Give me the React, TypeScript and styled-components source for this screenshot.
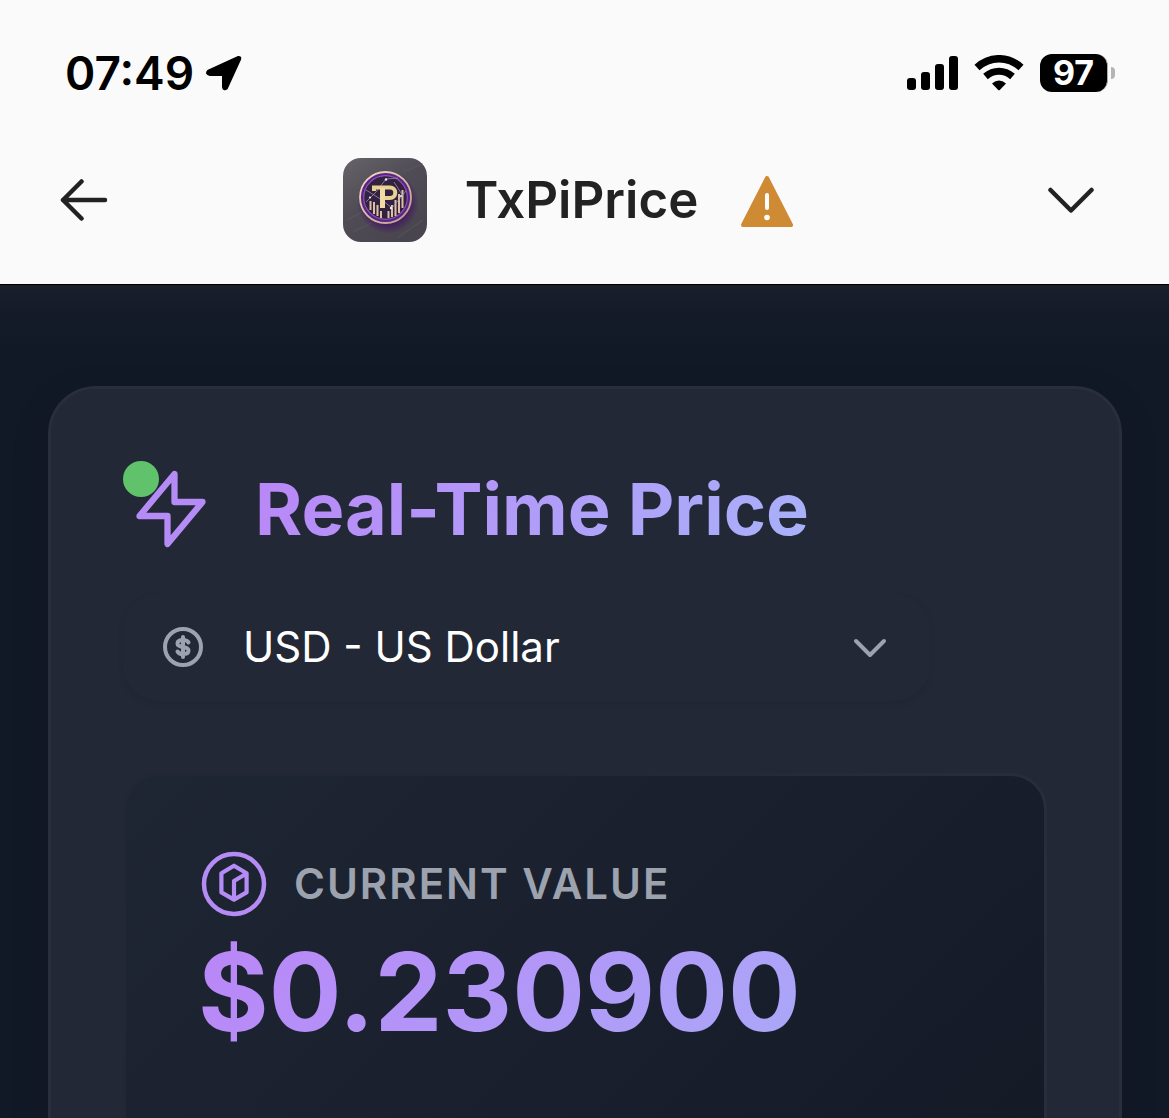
import React from "react";
import styled, { createGlobalStyle } from "styled-components";

const GlobalStyle = createGlobalStyle`
  *, *::before, *::after { box-sizing: border-box; }
  body {
    margin: 0;
    background: #121926;
    font-family: Inter, "Liberation Sans", sans-serif;
  }
  h1, h2, p { margin: 0; }
  svg { display: block; flex: none; }
`;

const Screen = styled.div`
  display: flex;
  flex-direction: column;
  height: 100vh;
  overflow: hidden;
`;

const Header = styled.header`
  flex: none;
  padding-bottom: 30px;
  background: #fafafa;
  border-bottom: 1px solid #000;
`;

const StatusBar = styled.div`
  display: flex;
  align-items: center;
  justify-content: space-between;
  height: 146px;
  padding: 0 54px 0 65px;
  color: #000;
`;

const StatusGroup = styled.div<{ $gap: number }>`
  display: flex;
  align-items: center;
  gap: ${(p) => p.$gap}px;
`;

const Clock = styled.time`
  font-size: 46px;
  line-height: 58px;
  font-weight: 600;
`;

const Battery = styled.div`
  display: flex;
  align-items: center;
  gap: 3px;
`;

const BatteryLevel = styled.span`
  display: grid;
  place-items: center;
  width: 68px;
  height: 38px;
  border-radius: 12px;
  background: #000;
  border-right: 1px solid #aaa;
  color: #fff;
  font-size: 34px;
  line-height: 38px;
  font-weight: 700;
`;

const BatteryTip = styled.span`
  width: 4px;
  height: 12px;
  border-radius: 0 6px 6px 0;
  background: #b4b4b4;
`;

const NavBar = styled.nav`
  display: flex;
  align-items: center;
  justify-content: space-between;
  height: 108px;
  padding: 0 75px 0 60px;
`;

const IconButton = styled.button`
  display: grid;
  place-items: center;
  width: 48px;
  height: 84px;
  padding: 0;
  border: 0;
  background: none;
  color: #222;
  cursor: pointer;
`;

const AppIdentity = styled.div`
  display: flex;
  align-items: center;
  padding-right: 17px;
`;

const AppName = styled.h1`
  margin: 0 42px 0 38px;
  color: #222;
  font-size: 51px;
  line-height: 66px;
  font-weight: 600;
`;

const Main = styled.main`
  flex: 1;
  min-height: 0;
  overflow: hidden;
  padding: 101px 47px 48px 48px;
  background: linear-gradient(180deg, #191f2b 0, #141b28 30px, #121926 72px);
`;

const Card = styled.section`
  padding: 72px;
  border: 3px solid #282e3b;
  border-radius: 48px;
  background: #222835;
  box-shadow: 0 12px 36px rgba(14, 18, 34, 0.2);
`;

const CardHeader = styled.div`
  display: flex;
  align-items: center;
  gap: 36px;
`;

const LiveIcon = styled.div`
  position: relative;
  padding: 6px;
  color: #b58cf5;
`;

const LiveDot = styled.span`
  position: absolute;
  top: 0;
  left: 0;
  width: 36px;
  height: 36px;
  border-radius: 50%;
  background: #61c26c;
`;

const GradientTitle = styled.h2`
  font-size: 72px;
  line-height: 96px;
  font-weight: 700;
  color: transparent;
  background: linear-gradient(135deg, #ba85f7, #a8b3fa);
  background-clip: text;
`;

const SelectBox = styled.label`
  position: relative;
  display: block;
  max-width: 807px;
  margin: 36px 0 72px;
  border-radius: 36px;
  background: #222835;
  box-shadow: 0 3px 6px rgba(16, 20, 32, 0.08);
  color: #9ca3af;
`;

const Select = styled.select`
  display: block;
  appearance: none;
  width: 100%;
  height: 108px;
  padding: 0 120px;
  border: 0;
  border-radius: 36px;
  background: transparent;
  color: #fff;
  font: 400 42px/54px Inter, "Liberation Sans", sans-serif;
`;

const FieldIcon = styled.span<{ $side: "left" | "right" }>`
  position: absolute;
  top: 0;
  bottom: 0;
  ${(p) => p.$side}: 36px;
  display: flex;
  align-items: center;
  pointer-events: none;
`;

const ValuePanel = styled.div`
  padding: 72px 72px 144px;
  border: 3px solid transparent;
  border-radius: 36px;
  background:
    linear-gradient(135deg, #1f2633, #141926) padding-box,
    linear-gradient(100deg, #212733 40%, #282e3b) border-box;
`;

const ValueLabel = styled.div`
  display: flex;
  align-items: center;
  gap: 24px;
  color: #9ca3af;
  font-size: 42px;
  line-height: 72px;
  font-weight: 600;
  letter-spacing: 2px;
`;

const Price = styled.p`
  width: fit-content;
  margin-top: 6px;
  font-size: 108px;
  line-height: 132px;
  font-weight: 700;
  color: transparent;
  background: linear-gradient(135deg, #ba85f7, #aaa8f8);
  background-clip: text;
`;

const LocationIcon = () => (
  <svg width="36" height="36" viewBox="0 0 36 36" aria-hidden="true">
    <path d="M2.500 16 32 2.500Q34.500 2 33.500 4.500L20.500 33Q18 35 17.500 32V19.500H4Q0 18.500 2.500 16Z" fill="#000" stroke="#000" strokeWidth="3" strokeLinejoin="round" />
  </svg>
);

const SignalIcon = () => (
  <svg width="51" height="34" viewBox="0 0 51 34" aria-hidden="true">
    <rect x="0" y="22" width="9" height="12" rx="3" />
    <rect x="14" y="16" width="9" height="18" rx="3" />
    <rect x="28" y="8" width="9" height="26" rx="3" />
    <rect x="42" y="0" width="9" height="34" rx="3" />
  </svg>
);

const WifiIcon = () => (
  <svg width="50" height="36" viewBox="0 0 50 36" aria-hidden="true">
    <path d="M3 12.500C16 .8 34 .8 47 12.500" fill="none" stroke="#000" strokeWidth="7.500" />
    <path d="M11.500 21.500C19.500 14.500 30.500 14.500 38.500 21.500" fill="none" stroke="#000" strokeWidth="7" />
    <path d="M18 28.500Q25 22.500 32 28.500L26 34.800Q25 35.800 24 34.800Z" />
  </svg>
);

const BackIcon = () => (
  <svg width="48" height="48" viewBox="0 0 48 48" fill="none" stroke="currentColor" strokeWidth="4.500" strokeLinecap="round" strokeLinejoin="round" aria-hidden="true">
    <path d="M21.500 5.500 3 24l18.500 18.500M3 24h42" />
  </svg>
);

const ExpandIcon = () => (
  <svg width="48" height="48" viewBox="0 0 48 48" fill="none" stroke="currentColor" strokeWidth="4.500" strokeLinecap="round" strokeLinejoin="round" aria-hidden="true">
    <path d="m4.500 14 20.500 20.500L45.500 14" />
  </svg>
);

const AppLogo = () => (
  <svg width="84" height="84" viewBox="0 0 84 84" role="img" aria-label="TxPiPrice logo">
    <defs>
      <linearGradient id="tile" x1="0" y1="0" x2="0.7" y2="1">
        <stop offset="0" stopColor="#67636a" />
        <stop offset="0.5" stopColor="#504c55" />
        <stop offset="1" stopColor="#49454e" />
      </linearGradient>
      <linearGradient id="gold" x1="0" y1="0" x2="1" y2="1">
        <stop offset="0" stopColor="#f3e2c0" />
        <stop offset="1" stopColor="#b99b88" />
      </linearGradient>
      <radialGradient id="glow">
        <stop offset="0.6" stopColor="#41165f" />
        <stop offset="1" stopColor="#41165f" stopOpacity="0" />
      </radialGradient>
    </defs>
    <rect width="84" height="84" rx="18" fill="url(#tile)" />
    <path d="M4 62 30 48M54 80l26-18M10 74l20-10M60 14l20-8" stroke="#65606b" strokeWidth="0.5" />
    <circle cx="45" cy="45" r="31" fill="url(#glow)" />
    <circle cx="42.500" cy="39.500" r="26.500" fill="#5b2388" />
    <circle cx="42.500" cy="39.500" r="25.500" fill="none" stroke="url(#gold)" strokeWidth="1.800" />
    <circle cx="42.500" cy="39.500" r="21.800" fill="#33223f" stroke="#8a55b5" strokeWidth="1.200" />
    <g fill="#dcc0a4">
      <rect x="26.500" y="43" width="2" height="9" />
      <rect x="30" y="44" width="2" height="12" />
      <rect x="33.500" y="47" width="2" height="11" />
      <rect x="37" y="53" width="2" height="7" />
      <rect x="44.500" y="53" width="2" height="7" />
      <rect x="48" y="47" width="2" height="12" />
      <rect x="51.500" y="42" width="2" height="16" />
      <rect x="55" y="36" width="2" height="19" />
      <rect x="58.500" y="32" width="2" height="18" />
    </g>
    <path d="m23 44 10-10 10-13 12-1M23 32l16 10 10 8 14-17M51 24l9 14" fill="none" stroke="#a898bd" strokeWidth="0.700" />
    <g fill="#efe6f6">
      <circle cx="43" cy="21.500" r="1.200" />
      <circle cx="27" cy="39.500" r="1.100" />
      <circle cx="48" cy="50" r="1.200" />
      <circle cx="58" cy="38" r="1.100" />
    </g>
    <path d="M31 33V29.500H47A5 5 0 0 1 47 40H41" fill="none" stroke="#e8d193" strokeWidth="4" />
    <path d="M39.500 30V50" stroke="#f0dca4" strokeWidth="5" />
  </svg>
);

const WarningIcon = () => (
  <svg width="54" height="54" viewBox="0 0 54 54" role="img" aria-label="Warning">
    <path d="M27 5 51 52H3Z" fill="#cf8a34" stroke="#cf8a34" strokeWidth="4" strokeLinejoin="round" />
    <path d="M27 22v13" stroke="#fff" strokeWidth="4" strokeLinecap="round" />
    <circle cx="27" cy="44.500" r="2.800" fill="#fff" />
  </svg>
);

const BoltIcon = () => (
  <svg width="84" height="84" viewBox="0 0 24 24" fill="none" stroke="currentColor" strokeWidth="1.800" strokeLinecap="round" strokeLinejoin="round" aria-hidden="true">
    <path d="M13 2v8h8L11 22v-8H3Z" />
  </svg>
);

const DollarIcon = () => (
  <svg width="48" height="48" viewBox="0 0 48 48" fill="none" stroke="currentColor" strokeWidth="4" strokeLinecap="round" aria-hidden="true">
    <circle cx="24" cy="24" r="18" />
    <path d="M29.500 19.500C28.500 17.500 26.500 17 24 17c-3.500 0-5.500 1.300-5.500 3.500s2 3 5.500 3.500 5.500 1.300 5.500 3.500S27.500 31 24 31c-2.500 0-4.500-.5-5.500-2.500M24 14v20" />
  </svg>
);

const ChevronIcon = () => (
  <svg width="48" height="48" viewBox="0 0 48 48" fill="none" stroke="currentColor" strokeWidth="4" strokeLinecap="round" strokeLinejoin="round" aria-hidden="true">
    <path d="m10 18 14 14 14-14" />
  </svg>
);

const CoinIcon = () => (
  <svg width="72" height="72" viewBox="0 0 24 24" fill="none" stroke="#b58cf5" strokeWidth="1.500" aria-hidden="true">
    <circle cx="12" cy="12" r="10" />
    <path d="m12 5.900 4.200 2.500v6.400L12 17.200l-4.200-2.400V8.400L12 5.900ZM16.200 8.500 12 11v6" strokeWidth="1.400" strokeLinejoin="round" />
  </svg>
);

export default function App() {
  return (
    <>
      <GlobalStyle />
      <Screen>
        <Header>
          <StatusBar>
            <StatusGroup $gap={12}>
              <Clock>07:49</Clock>
              <LocationIcon />
            </StatusGroup>
            <StatusGroup $gap={16}>
              <SignalIcon />
              <WifiIcon />
              <Battery>
                <BatteryLevel>97</BatteryLevel>
                <BatteryTip />
              </Battery>
            </StatusGroup>
          </StatusBar>
          <NavBar>
            <IconButton aria-label="Back">
              <BackIcon />
            </IconButton>
            <AppIdentity>
              <AppLogo />
              <AppName>TxPiPrice</AppName>
              <WarningIcon />
            </AppIdentity>
            <IconButton aria-label="Expand">
              <ExpandIcon />
            </IconButton>
          </NavBar>
        </Header>
        <Main>
          <Card>
            <CardHeader>
              <LiveIcon>
                <BoltIcon />
                <LiveDot />
              </LiveIcon>
              <GradientTitle>Real-Time Price</GradientTitle>
            </CardHeader>
            <SelectBox>
              <FieldIcon $side="left">
                <DollarIcon />
              </FieldIcon>
              <Select aria-label="Currency" defaultValue="usd">
                <option value="usd">USD - US Dollar</option>
              </Select>
              <FieldIcon $side="right">
                <ChevronIcon />
              </FieldIcon>
            </SelectBox>
            <ValuePanel>
              <ValueLabel>
                <CoinIcon />
                <span>CURRENT VALUE</span>
              </ValueLabel>
              <Price>$0.230900</Price>
            </ValuePanel>
          </Card>
        </Main>
      </Screen>
    </>
  );
}
